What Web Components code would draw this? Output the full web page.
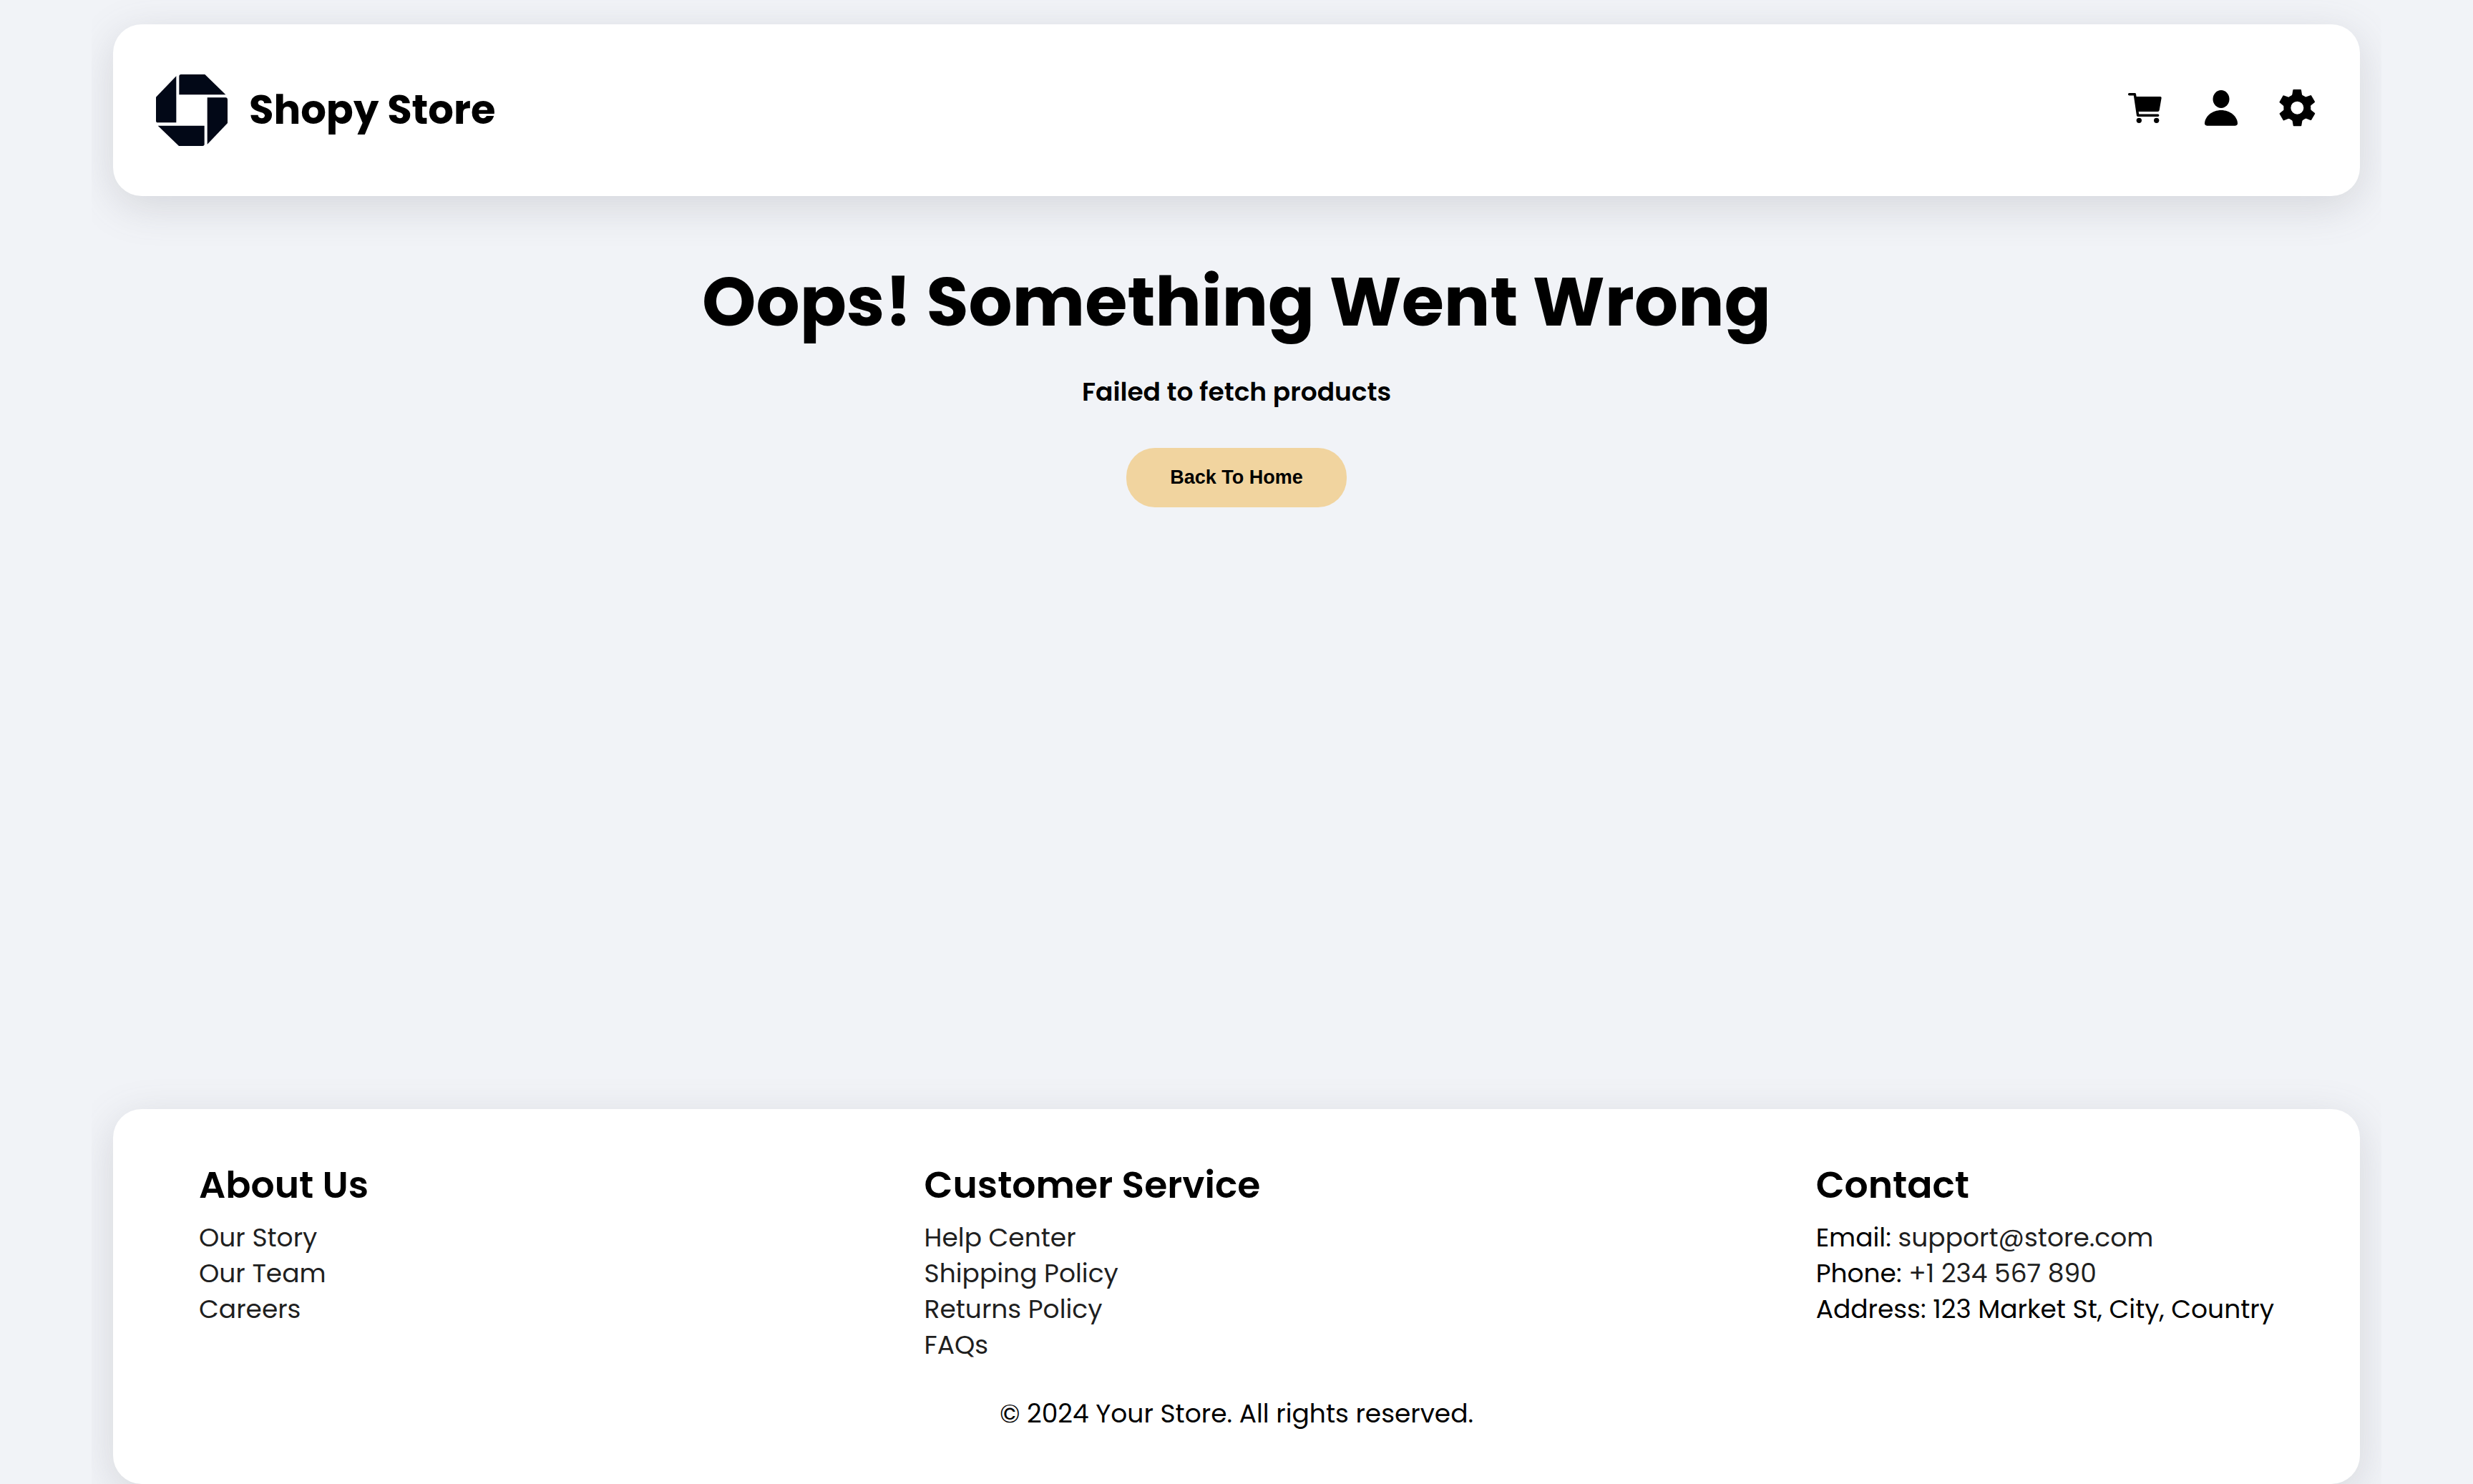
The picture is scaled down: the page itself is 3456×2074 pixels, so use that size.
<!DOCTYPE html>
<html lang="en">
<head>
<meta charset="utf-8">
<title>Shopy Store</title>
<style>
  body {
    margin: 0;
    background: #f1f3f7;
    color: #000;
    font-family: Poppins, Inter, sans-serif;
    font-size: 36px;
    line-height: 54px;
  }
</style>
</head>
<body>
<store-page>
  <store-header slot="header"></store-header>
  <error-message heading="Oops! Something Went Wrong" action="Back To Home">Failed to fetch products</error-message>
  <store-footer slot="footer">
    <footer-column heading="About Us">
      <footer-item><a href="#story">Our Story</a></footer-item>
      <footer-item><a href="#team">Our Team</a></footer-item>
      <footer-item><a href="#careers">Careers</a></footer-item>
    </footer-column>
    <footer-column heading="Customer Service">
      <footer-item><a href="#help">Help Center</a></footer-item>
      <footer-item><a href="#shipping">Shipping Policy</a></footer-item>
      <footer-item><a href="#returns">Returns Policy</a></footer-item>
      <footer-item><a href="#faqs">FAQs</a></footer-item>
    </footer-column>
    <footer-column heading="Contact">
      <footer-item>Email: <a href="mailto:support@store.com">support@store.com</a></footer-item>
      <footer-item>Phone: <a href="tel:+1234567890">+1 234 567 890</a></footer-item>
      <footer-item>Address: 123 Market St, City, Country</footer-item>
    </footer-column>
    <span slot="copyright">© 2024 Your Store. All rights reserved.</span>
  </store-footer>
</store-page>

<script>
const define = (name, render) => customElements.define(name, class extends HTMLElement {
  connectedCallback() {
    if (this.shadowRoot) return;
    this.attachShadow({ mode: 'open' }).innerHTML = render(this);
  }
});

const card = `
  background: #fff;
  border-radius: 40px;
  box-shadow: 0 14px 58px rgba(100, 100, 111, 0.2);
  box-sizing: border-box;`;

define('store-page', () => `
  <style>
    :host {
      display: flex;
      flex-direction: column;
      box-sizing: border-box;
      max-width: 3200px;
      min-height: 100vh;
      margin: 0 auto;
      padding: 34px 30px 0;
      overflow: clip;
    }
    main { flex: 1; padding: 76px 0; }
  </style>
  <slot name="header"></slot>
  <main><slot></slot></main>
  <slot name="footer"></slot>`);

define('store-logo', () => `
  <style>
    :host { display: block; }
    svg { display: block; width: 100px; height: 100px; fill: #020817; }
  </style>
  <svg viewBox="54 42 300 300" aria-hidden="true">
    <path d="M151 50q0-8 8-8H259L346 127H151z"/>
    <path d="M269 139H346q8 1 8 9V246L269 335z"/>
    <path d="M62 257H257V334q0 8-8 8H150z"/>
    <path d="M139 49V244H62q-8 0-8-8V137z"/>
  </svg>`);

const icons = {
  cart: `<svg viewBox="30 42 168 180" aria-hidden="true">
    <path d="M47 65H70L83 154H167" fill="none" stroke="currentColor" stroke-width="10.5" stroke-linecap="round" stroke-linejoin="round"/>
    <path d="M68 75H177q5 0 5 5L173 132q-1 6-7 6H80z"/>
    <circle cx="88" cy="175" r="11"/><circle cx="161" cy="175" r="11"/>
  </svg>`,
  person: `<svg viewBox="36 42 168 180" aria-hidden="true">
    <ellipse cx="120" cy="85.500" rx="34.500" ry="37.500"/>
    <path d="M61 197q-10 0-10-10C52 158 83 132 120 132s68 26 69 55q0 10-10 10z"/>
  </svg>`,
  settings: `<svg viewBox="36 42 168 180" aria-hidden="true">
    <defs><path id="tooth" d="M93 76Q99 72 100 66L103 48q0-3 3-3h29q3 0 3 3L141 66Q142 72 148 76L121 90z"/></defs>
    <path fill-rule="evenodd" d="M64 122a57 57 0 1 0 114 0a57 57 0 1 0-114 0zM94 122a27 27 0 1 1 54 0a27 27 0 1 1-54 0z"/>
    ${[0, 60, 120, 180, 240, 300].map(a => `<use href="#tooth" transform="rotate(${a} 121 122)"/>`).join('')}
  </svg>`
};

define('icon-link', el => `
  <style>
    :host { display: block; }
    a { display: block; color: #000; }
    svg { display: block; width: 56px; height: 60px; fill: currentColor; }
  </style>
  <a href="#${el.getAttribute('icon')}" aria-label="${el.getAttribute('label')}">${icons[el.getAttribute('icon')]}</a>`);

define('store-header', () => `
  <style>
    :host { display: block; }
    header {
      ${card}
      display: flex;
      align-items: center;
      justify-content: space-between;
      padding: 70px 60px;
    }
    .brand { display: flex; align-items: center; gap: 30px; color: inherit; text-decoration: none; }
    .name { font-size: 56px; line-height: 84px; font-weight: 700; }
    nav { display: flex; gap: 50px; }
  </style>
  <header>
    <a class="brand" href="#home"><store-logo></store-logo><span class="name">Shopy Store</span></a>
    <nav>
      <icon-link icon="cart" label="Cart"></icon-link>
      <icon-link icon="person" label="Account"></icon-link>
      <icon-link icon="settings" label="Settings"></icon-link>
    </nav>
  </header>`);

define('error-message', el => `
  <style>
    :host { display: flex; flex-direction: column; align-items: center; text-align: center; }
    h1 { margin: 0; font-size: 96px; line-height: 144px; font-weight: 700; }
    p { margin: 27px 0 51px; font-weight: 600; }
    button {
      border: 0;
      border-radius: 40px;
      padding: 26px 61px;
      background: #f1d49f;
      color: #000;
      font: 700 27px/31px Arial, "Liberation Sans", sans-serif;
    }
  </style>
  <h1>${el.getAttribute('heading')}</h1>
  <p><slot></slot></p>
  <button type="button">${el.getAttribute('action')}</button>`);

define('store-footer', () => `
  <style>
    :host { display: block; }
    footer { ${card} padding: 67px 120px 71px; }
    .columns { display: flex; justify-content: space-between; align-items: flex-start; }
    p { margin: 44px 0 0; text-align: center; }
  </style>
  <footer>
    <div class="columns"><slot></slot></div>
    <p><slot name="copyright"></slot></p>
  </footer>`);

define('footer-column', el => `
  <style>
    :host { display: block; }
    h2 { margin: 0 0 10px; font-size: 52px; line-height: 78px; font-weight: 600; }
  </style>
  <h2>${el.getAttribute('heading')}</h2>
  <div role="list"><slot></slot></div>`);

define('footer-item', el => {
  el.setAttribute('role', 'listitem');
  return `
  <style>
    :host { display: block; line-height: 50px; }
    ::slotted(a) { color: #1f1f1f; text-decoration: none; }
  </style>
  <slot></slot>`;
});
</script>
</body>
</html>
